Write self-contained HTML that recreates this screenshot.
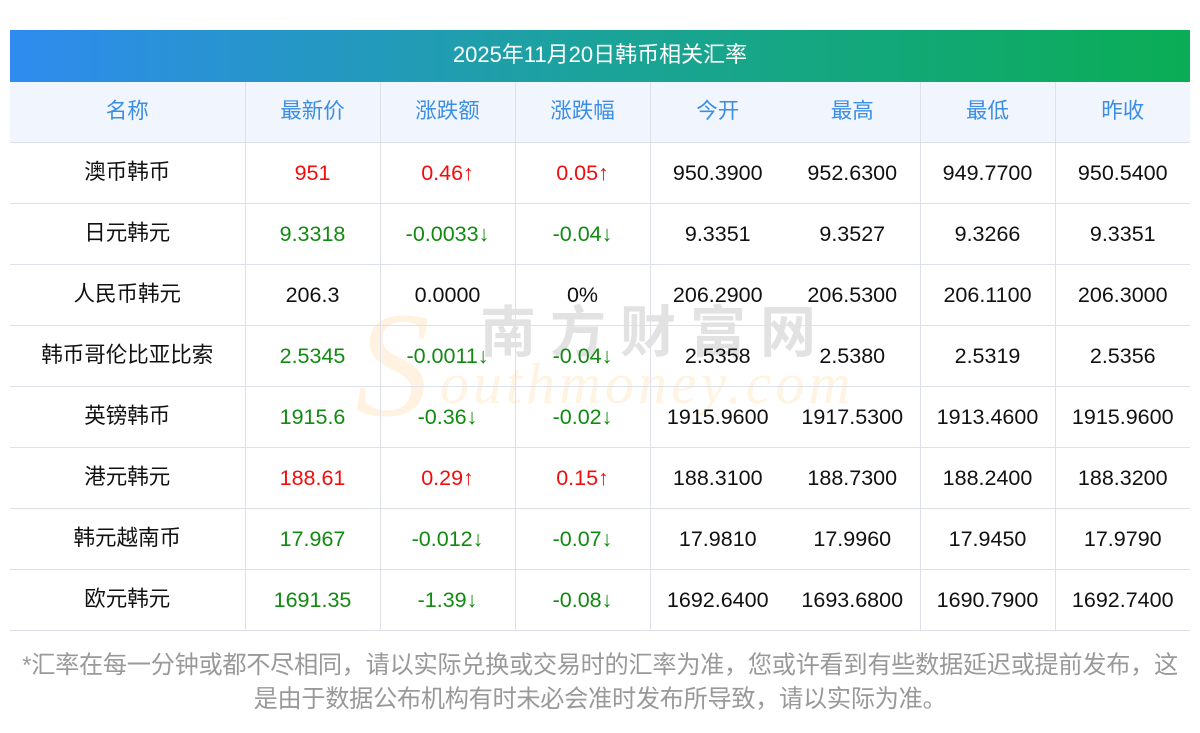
<!DOCTYPE html>
<html><head><meta charset="utf-8"><style>
body{margin:0;background:#fff;width:1200px;height:733px;position:relative;overflow:hidden;font-family:"Liberation Sans","Noto Sans CJK SC",sans-serif;}
.title{position:absolute;left:10px;top:30px;width:1180px;height:52px;background:linear-gradient(90deg,#2f8bef,#1ba39a 50%,#0aad55);color:#fff;font-size:22px;line-height:50px;text-align:center;}
table{position:absolute;left:10px;top:82px;width:1180px;border-collapse:collapse;table-layout:fixed;}
td,th{height:60px;padding:0;text-align:center;font-size:21.5px;font-weight:normal;border-right:1px solid #dde0ea;border-bottom:1px solid #dde0ea;color:#111;}
th{background:#f1f6fe;color:#3b8ee3;font-size:21.5px;}
th span,td.n span{position:relative;top:-3px;}
td.n{font-size:21.5px;}
td:last-child,th:last-child{border-right:none;}
.nb{border-right:none;}
.r{color:#f20d0d}.g{color:#118a11}
.wm1{position:absolute;left:480px;top:288px;font-size:56px;color:rgba(150,150,150,0.28);letter-spacing:14px;font-weight:bold;font-family:"Noto Sans CJK SC",sans-serif;}
.wm2{position:absolute;left:440px;top:350px;font-size:58px;color:rgba(255,200,120,0.22);font-style:italic;font-family:"Liberation Serif",serif;letter-spacing:4px;}
.wmS{position:absolute;left:355px;top:290px;font-size:150px;color:rgba(255,190,100,0.2);font-style:italic;font-family:"Liberation Serif",serif;line-height:150px;}
.note{position:absolute;left:0;top:649px;width:1200px;text-align:center;color:#999;font-size:24.2px;line-height:34px;letter-spacing:-0.3px;}
</style></head><body>
<div class="title">2025年11月20日韩币相关汇率</div>
<div class="wmS">S</div>
<div class="wm1">南方财富网</div>
<div class="wm2">outhmoney.com</div>
<table>
<colgroup><col style="width:235px"><col style="width:135px"><col style="width:135px"><col style="width:135px"><col style="width:135px"><col style="width:135px"><col style="width:135px"><col style="width:135px"></colgroup>
<tr><th><span>名称</span></th><th><span>最新价</span></th><th><span>涨跌额</span></th><th><span>涨跌幅</span></th><th class="nb"><span>今开</span></th><th><span>最高</span></th><th><span>最低</span></th><th><span>昨收</span></th></tr>
<tr><td class="n"><span>澳币韩币</span></td><td class="r">951</td><td class="r">0.46↑</td><td class="r">0.05↑</td><td class="nb">950.3900</td><td>952.6300</td><td>949.7700</td><td>950.5400</td></tr>
<tr><td class="n"><span>日元韩元</span></td><td class="g">9.3318</td><td class="g">-0.0033↓</td><td class="g">-0.04↓</td><td class="nb">9.3351</td><td>9.3527</td><td>9.3266</td><td>9.3351</td></tr>
<tr><td class="n"><span>人民币韩元</span></td><td>206.3</td><td>0.0000</td><td>0%</td><td class="nb">206.2900</td><td>206.5300</td><td>206.1100</td><td>206.3000</td></tr>
<tr><td class="n"><span>韩币哥伦比亚比索</span></td><td class="g">2.5345</td><td class="g">-0.0011↓</td><td class="g">-0.04↓</td><td class="nb">2.5358</td><td>2.5380</td><td>2.5319</td><td>2.5356</td></tr>
<tr><td class="n"><span>英镑韩币</span></td><td class="g">1915.6</td><td class="g">-0.36↓</td><td class="g">-0.02↓</td><td class="nb">1915.9600</td><td>1917.5300</td><td>1913.4600</td><td>1915.9600</td></tr>
<tr><td class="n"><span>港元韩元</span></td><td class="r">188.61</td><td class="r">0.29↑</td><td class="r">0.15↑</td><td class="nb">188.3100</td><td>188.7300</td><td>188.2400</td><td>188.3200</td></tr>
<tr><td class="n"><span>韩元越南币</span></td><td class="g">17.967</td><td class="g">-0.012↓</td><td class="g">-0.07↓</td><td class="nb">17.9810</td><td>17.9960</td><td>17.9450</td><td>17.9790</td></tr>
<tr><td class="n"><span>欧元韩元</span></td><td class="g">1691.35</td><td class="g">-1.39↓</td><td class="g">-0.08↓</td><td class="nb">1692.6400</td><td>1693.6800</td><td>1690.7900</td><td>1692.7400</td></tr>
</table>
<div class="note">*汇率在每一分钟或都不尽相同，请以实际兑换或交易时的汇率为准，您或许看到有些数据延迟或提前发布，这<br>是由于数据公布机构有时未必会准时发布所导致，请以实际为准。</div>
</body></html>
